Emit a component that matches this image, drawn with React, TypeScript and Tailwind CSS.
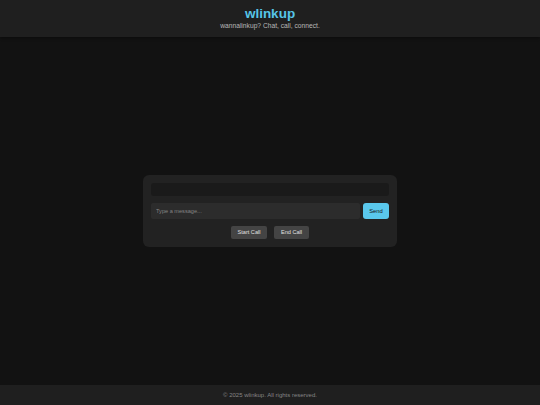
export default function App() {
  return (
    <div className="flex h-[405px] w-[540px] flex-col overflow-hidden bg-[#121212] font-['Liberation_Sans',Arial,sans-serif]">
      {/* HEADER */}
      <header className="flex h-[37px] flex-col items-center bg-[#1f1f1f] pt-[7px] shadow-[0_1px_3px_rgba(0,0,0,0.4)]">
        <h1 className="text-[13.5px] leading-[14px] font-bold text-[#56c5e8]">wlinkup</h1>
        <p className="text-[6.7px] leading-[9px] text-[#b8b8b8]">wannalinkup? Chat, call, connect.</p>
      </header>

      {/* MAIN */}
      <main className="flex flex-1 items-center justify-center">
        <div className="flex w-[254px] flex-col rounded-[6px] bg-[#222222] p-[8px]">
          <div className="h-[13px] rounded-[3px] bg-[#1a1a1a]" />
          <div className="mt-[7px] flex gap-[3px]">
            <input
              placeholder="Type a message..."
              className="h-[16px] flex-1 rounded-[2px] bg-[#2c2c2c] px-[5px] text-[5.6px] outline-none placeholder:text-[#858585]"
            />
            <button className="h-[16px] w-[26px] rounded-[3px] bg-[#5ac8ec] text-[5.8px] text-[#121212]">Send</button>
          </div>
          <div className="mt-[7px] flex justify-center gap-[7px]">
            <button className="h-[13px] w-[36px] rounded-[2px] bg-[#444444] text-[5.6px] text-[#e0e0e0]">Start Call</button>
            <button className="h-[13px] w-[35px] rounded-[2px] bg-[#444444] text-[5.6px] text-[#e0e0e0]">End Call</button>
          </div>
        </div>
      </main>

      {/* FOOTER */}
      <footer className="flex h-[20px] items-center justify-center bg-[#1f1f1f] text-[6px] text-[#858585]">
        © 2025 wlinkup. All rights reserved.
      </footer>
    </div>
  );
}
